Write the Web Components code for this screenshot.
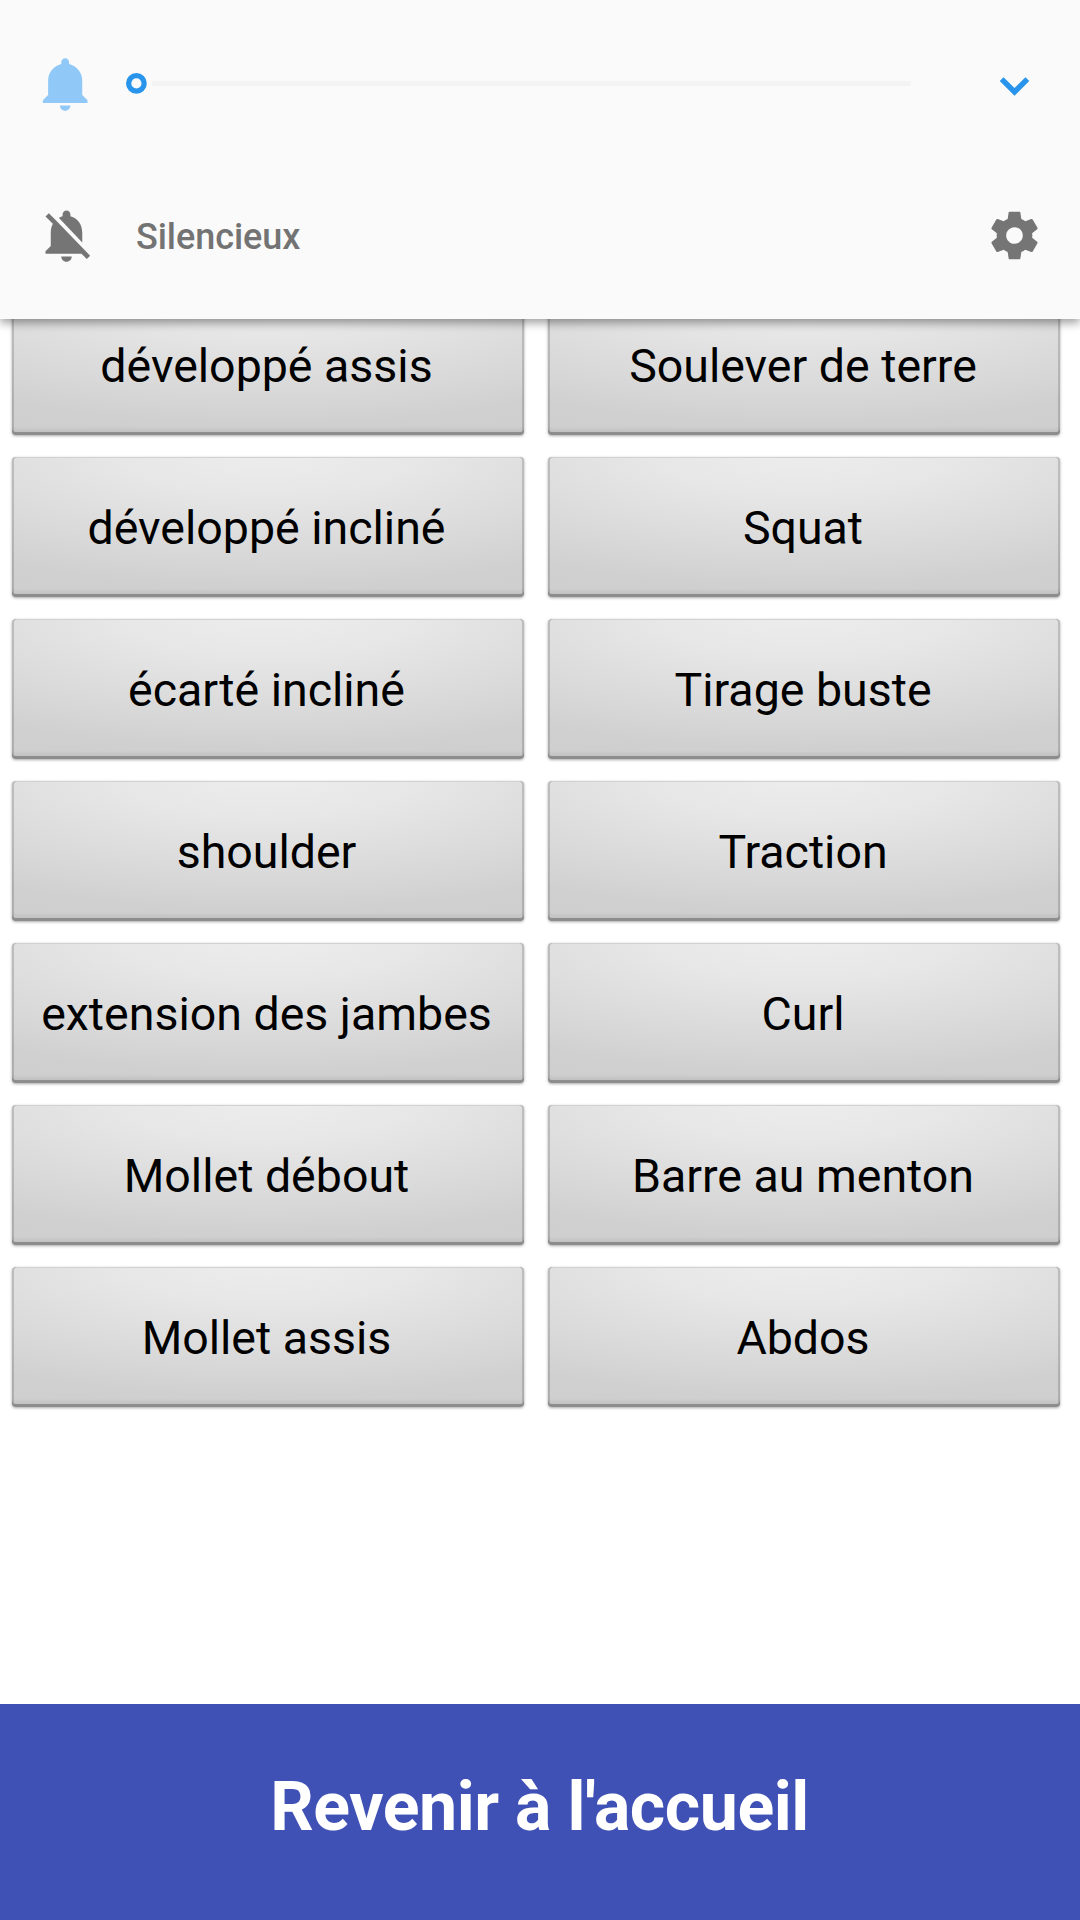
<!DOCTYPE html>
<html lang="fr">
<head>
<meta charset="utf-8">
<title>Exercices</title>
<style>
html,body{margin:0;padding:0;background:#fff}
body{font-family:Roboto,"Liberation Sans",sans-serif}
</style>
</head>
<body>
<workout-app></workout-app>
<script>
const define = (name, html) => customElements.define(name, class extends HTMLElement {
  constructor() {
    super();
    const t = document.createElement('template');
    t.innerHTML = html;
    this.attachShadow({ mode: 'open' }).append(t.content.cloneNode(true));
  }
});

define('volume-slider', `
<style>
:host{display:flex;align-items:center;flex:none;width:786px;height:21px}
svg{display:block;flex:none}
.track{flex:1;height:5px;margin:0 1px 0 5px;background:#f3f3f3}
</style>
<svg width="21" height="21" viewBox="0 0 21 21"><circle cx="10.4" cy="10.4" r="7.75" fill="#fafafa" stroke="#2994ec" stroke-width="5.3"/></svg><div class="track"></div>`);

define('volume-panel', `
<style>
:host{display:flex;flex-direction:column;box-sizing:border-box;height:319px;background:#fafafa;position:relative;z-index:1;box-shadow:0 4px 9px rgba(0,0,0,.38)}
.row{display:flex;align-items:center;padding-left:35px;padding-right:36px}
.row1{height:168px}
.row2{height:135px;padding-right:37px}
svg{display:block;flex:none}
volume-slider{margin-left:28px;margin-bottom:1px}
.chevron{margin-top:5px}
.fill{flex:1}
.label{margin-left:38px;padding-top:2px;font-size:36px;letter-spacing:-.05px;line-height:42px;font-weight:500;color:#737373;white-space:nowrap}
</style>
<div class="row row1">
  <svg width="63" height="63" viewBox="0 0 24 24" fill="#90c9f8"><path d="M11.5 22c1.1 0 2-.9 2-2h-4c0 1.1.9 2 2 2zm6.5-6v-5.5c0-3.07-2.13-5.64-5-6.32V3.5c0-.83-.67-1.5-1.5-1.5S10 2.67 10 3.5v.68c-2.87.68-5 3.25-5 6.32V16l-2 2v1h17v-1l-2-2z"/></svg>
  <volume-slider></volume-slider>
  <span class="fill"></span>
  <svg class="chevron" width="59" height="59" viewBox="0 0 24 24" fill="#2994ec"><path d="M7.55 8.2 12 12.65l4.45-4.45L18 9.75l-6 6-6-6z"/></svg>
</div>
<div class="row row2">
  <svg width="63" height="63" viewBox="0 0 24 24" fill="#757575"><path d="M20 18.69L7.84 6.14 5.27 3.49 4 4.76l2.8 2.8v.01c-.52.99-.8 2.16-.8 3.42v5l-2 2v1h13.73l2 2L21 19.72l-1-1.03zM12 22c1.11 0 2-.89 2-2h-4c0 1.11.89 2 2 2zm6-7.32V11c0-3.08-1.64-5.64-4.5-6.32V4c0-.83-.67-1.5-1.5-1.5s-1.5.67-1.5 1.5v.68c-.15.03-.29.08-.42.12-.1.03-.2.07-.3.11h-.01c-.01 0-.01 0-.02.01-.23.09-.46.2-.68.31 0 0-.01 0-.01.01L18 14.68z"/></svg>
  <span class="label"><slot></slot></span>
  <span class="fill"></span>
  <svg width="57" height="57" viewBox="0 0 24 24" fill="#757575"><path d="M19.43 12.98c.04-.32.07-.64.07-.98s-.03-.66-.07-.98l2.11-1.65c.19-.15.24-.42.12-.64l-2-3.46c-.12-.22-.39-.3-.61-.22l-2.49 1c-.52-.4-1.08-.73-1.69-.98l-.38-2.65C14.46 2.18 14.25 2 14 2h-4c-.25 0-.46.18-.49.42l-.38 2.65c-.61.25-1.17.59-1.69.98l-2.49-1c-.23-.09-.49 0-.61.22l-2 3.46c-.13.22-.07.49.12.64l2.11 1.65c-.04.32-.07.65-.07.98s.03.66.07.98l-2.11 1.65c-.19.15-.24.42-.12.64l2 3.46c.12.22.39.3.61.22l2.49-1c.52.4 1.08.73 1.69.98l.38 2.65c.03.24.24.42.49.42h4c.25 0 .46-.18.49-.42l.38-2.65c.61-.25 1.17-.59 1.69-.98l2.49 1c.23.09.49 0 .61-.22l2-3.46c.12-.22.07-.49-.12-.64l-2.11-1.65zM12 15.5c-1.93 0-3.5-1.57-3.5-3.5s1.57-3.5 3.5-3.5 3.5 1.57 3.5 3.5-1.57 3.5-3.5 3.5z"/></svg>
</div>`);

define('exercise-button', `
<style>
:host{display:flex;align-items:center;justify-content:center;box-sizing:border-box;height:140px;border-radius:4px;padding:2px 3px 0 0;
font-size:46.5px;line-height:55px;color:#000;white-space:nowrap;
background:radial-gradient(ellipse 100% 105% at 50% -5%,#ededed 0%,#e7e7e7 30%,#dfdfdf 52%,#d5d5d5 80%,#d0d0d0 92%,#cfcfcf 100%);
box-shadow:inset 0 -3px 0 #8d8d8d,inset 0 -6px 3px rgba(0,0,0,.06),inset 2px 0 0 rgba(0,0,0,.14),inset -2px 0 0 rgba(0,0,0,.14),inset 0 1px 0 #d2d2d2,0 1px 3px rgba(0,0,0,.34)}
</style>
<span><slot></slot></span>`);

define('exercise-grid', `
<style>
:host{display:grid;grid-template-columns:512px 512px;column-gap:24px;row-gap:22px;padding-left:12px;margin-top:-24px}
::slotted(:nth-child(even)){padding-right:2px}
</style>
<slot></slot>`);

define('home-bar', `
<style>
:host{display:flex;align-items:center;justify-content:center;box-sizing:border-box;flex:none;height:216px;padding:0 1px 10px 0;background:#3f51b5;color:#fff;font-weight:700;font-size:68px;letter-spacing:-.45px;line-height:80px;white-space:nowrap}
</style>
<span><slot></slot></span>`);

define('workout-app', `
<style>
:host{display:flex;flex-direction:column;width:1080px;height:1920px;overflow:hidden;background:#fff}
main{flex:1;min-height:0}
</style>
<volume-panel>Silencieux</volume-panel>
<main><exercise-grid>
<exercise-button>développé assis</exercise-button><exercise-button>Soulever de terre</exercise-button>
<exercise-button>développé incliné</exercise-button><exercise-button>Squat</exercise-button>
<exercise-button>écarté incliné</exercise-button><exercise-button>Tirage buste</exercise-button>
<exercise-button>shoulder</exercise-button><exercise-button>Traction</exercise-button>
<exercise-button>extension des jambes</exercise-button><exercise-button>Curl</exercise-button>
<exercise-button>Mollet débout</exercise-button><exercise-button>Barre au menton</exercise-button>
<exercise-button>Mollet assis</exercise-button><exercise-button>Abdos</exercise-button>
</exercise-grid></main>
<home-bar>Revenir à l'accueil</home-bar>`);
</script>
</body>
</html>
